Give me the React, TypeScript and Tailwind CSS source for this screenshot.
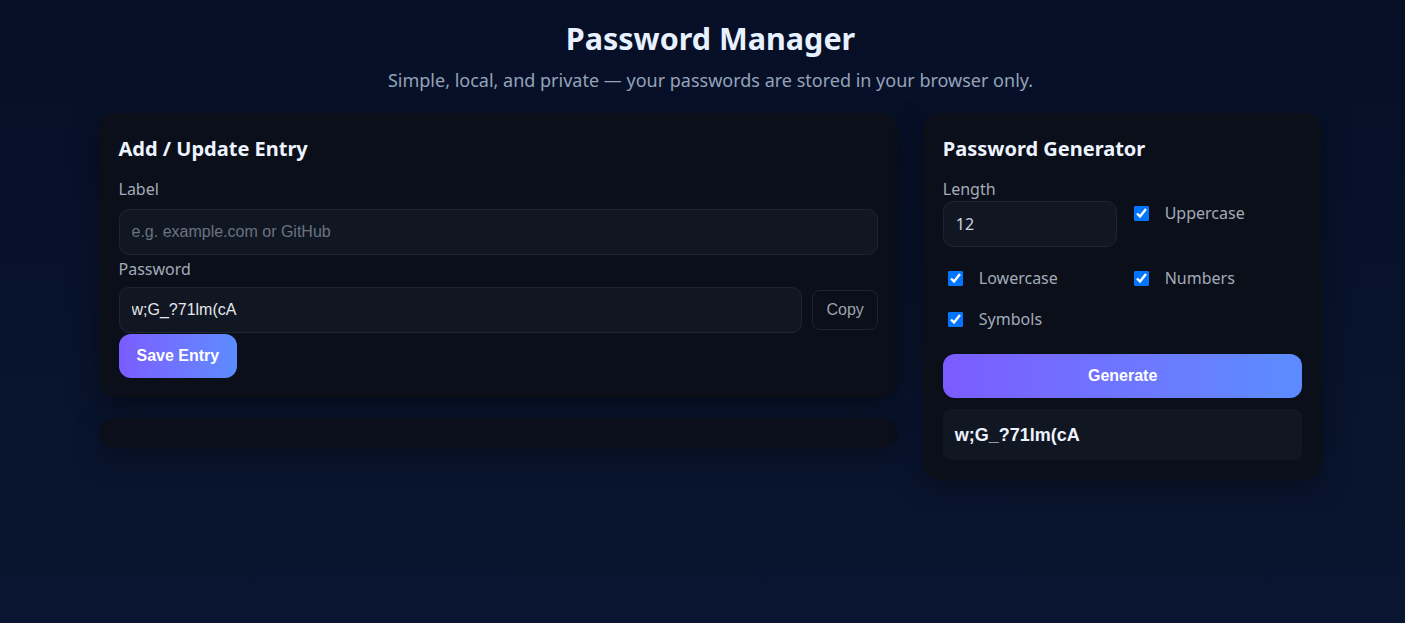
import { useState } from 'react';

const SANS = "font-['Noto_Sans','Open_Sans',sans-serif]";
const ARIAL = "font-['Liberation_Sans',Arial,sans-serif]";

function Check({ label, className = '' }: { label: string; className?: string }) {
  return (
    <label className={`flex items-center gap-[13px] text-base leading-6 text-[#a3abb8] ${className}`}>
      <input type="checkbox" defaultChecked className="w-[15px] h-[15px] m-[3px_3px_3px_5px]" />
      {label}
    </label>
  );
}

export default function App() {
  const [pwd] = useState('w;G_?71lm(cA');

  return (
    <div className={`min-h-screen bg-gradient-to-b from-[#060f26] to-[#0a1631] ${SANS} pl-[16px]`}>
      <div className="max-w-[1224px] mx-auto pt-[18px]">
        {/* Header */}
        <h1 className="text-[30.5px] leading-10 font-bold text-[#e8f1ff] text-center">Password Manager</h1>
        <p className="text-[18px] leading-[27px] text-[#94a3b8] text-center mt-[9px]">
          Simple, local, and private — your passwords are stored in your browser only.
        </p>

        <div className="grid grid-cols-[2fr_1fr] gap-[25px] mt-[19px] items-start">
          <div className="flex flex-col gap-[20px]">
            {/* Entry form */}
            <div className="bg-[#0b0f1a] rounded-2xl p-5 shadow-[0_10px_30px_rgba(0,0,0,0.35)]">
              <h2 className="text-xl leading-7 font-bold text-[#eef4ff] mt-[2px] mb-[14px]">Add / Update Entry</h2>
              <label className="block text-base leading-6 text-[#a3abb8] mb-2">Label</label>
              <input
                placeholder="e.g. example.com or GitHub"
                className={`w-full h-[46px] px-3 rounded-[10px] bg-[#111722] border border-[#1e2430] text-[#e5e7eb] placeholder:text-[#6b7280] outline-none text-base ${ARIAL}`}
              />
              <label className="block text-base leading-6 text-[#a3abb8] mt-[2px] mb-[6px]">Password</label>
              <div className="flex items-center gap-[10px]">
                <input
                  defaultValue={pwd}
                  className={`flex-1 h-[46px] px-3 rounded-[10px] bg-[#111722] border border-[#1e2430] text-[#e5e7eb] outline-none text-base ${ARIAL}`}
                />
                <button className={`h-10 px-[13px] rounded-lg border border-[#1e2430] text-[#9ca3af] text-base ${ARIAL}`}>Copy</button>
              </div>
              <button className={`mt-[1px] h-11 px-[18px] rounded-xl bg-gradient-to-r from-[#7b5cff] to-[#5b8cff] text-white font-bold text-base ${ARIAL}`}>
                Save Entry
              </button>
            </div>

            {/* Saved entries (empty) */}
            <div className="bg-[#0b0f1a] rounded-2xl p-[15px] shadow-[0_10px_30px_rgba(0,0,0,0.35)]" />
          </div>

          {/* Generator */}
          <div className="bg-[#0b0f1a] rounded-2xl p-5 shadow-[0_10px_30px_rgba(0,0,0,0.35)]">
            <h2 className="text-xl leading-7 font-bold text-[#eef4ff] mt-[2px] mb-[14px]">Password Generator</h2>
            <div className="grid grid-cols-2 gap-x-3">
              <div>
                <label className="block text-base leading-6 text-[#a3abb8]">Length</label>
                <input
                  type="number"
                  defaultValue={12}
                  className="w-full h-[46px] px-3 rounded-[10px] bg-[#111722] border border-[#1e2430] text-[#cbd5e1] outline-none text-base"
                />
              </div>
              <Check label="Uppercase" className="self-start mt-6" />
              <Check label="Lowercase" className="mt-[19px]" />
              <Check label="Numbers" className="mt-[19px]" />
              <Check label="Symbols" className="mt-[17px]" />
            </div>
            <button className={`mt-[23px] w-full h-11 rounded-xl bg-gradient-to-r from-[#7b5cff] to-[#5b8cff] text-white font-bold text-base ${ARIAL}`}>
              Generate
            </button>
            <div className={`mt-[11px] bg-[#111722] rounded-lg px-3 pt-[13px] pb-[11px] text-[18px] leading-[27px] font-bold text-[#eef2ff] ${ARIAL}`}>
              {pwd}
            </div>
          </div>
        </div>
      </div>
    </div>
  );
}
